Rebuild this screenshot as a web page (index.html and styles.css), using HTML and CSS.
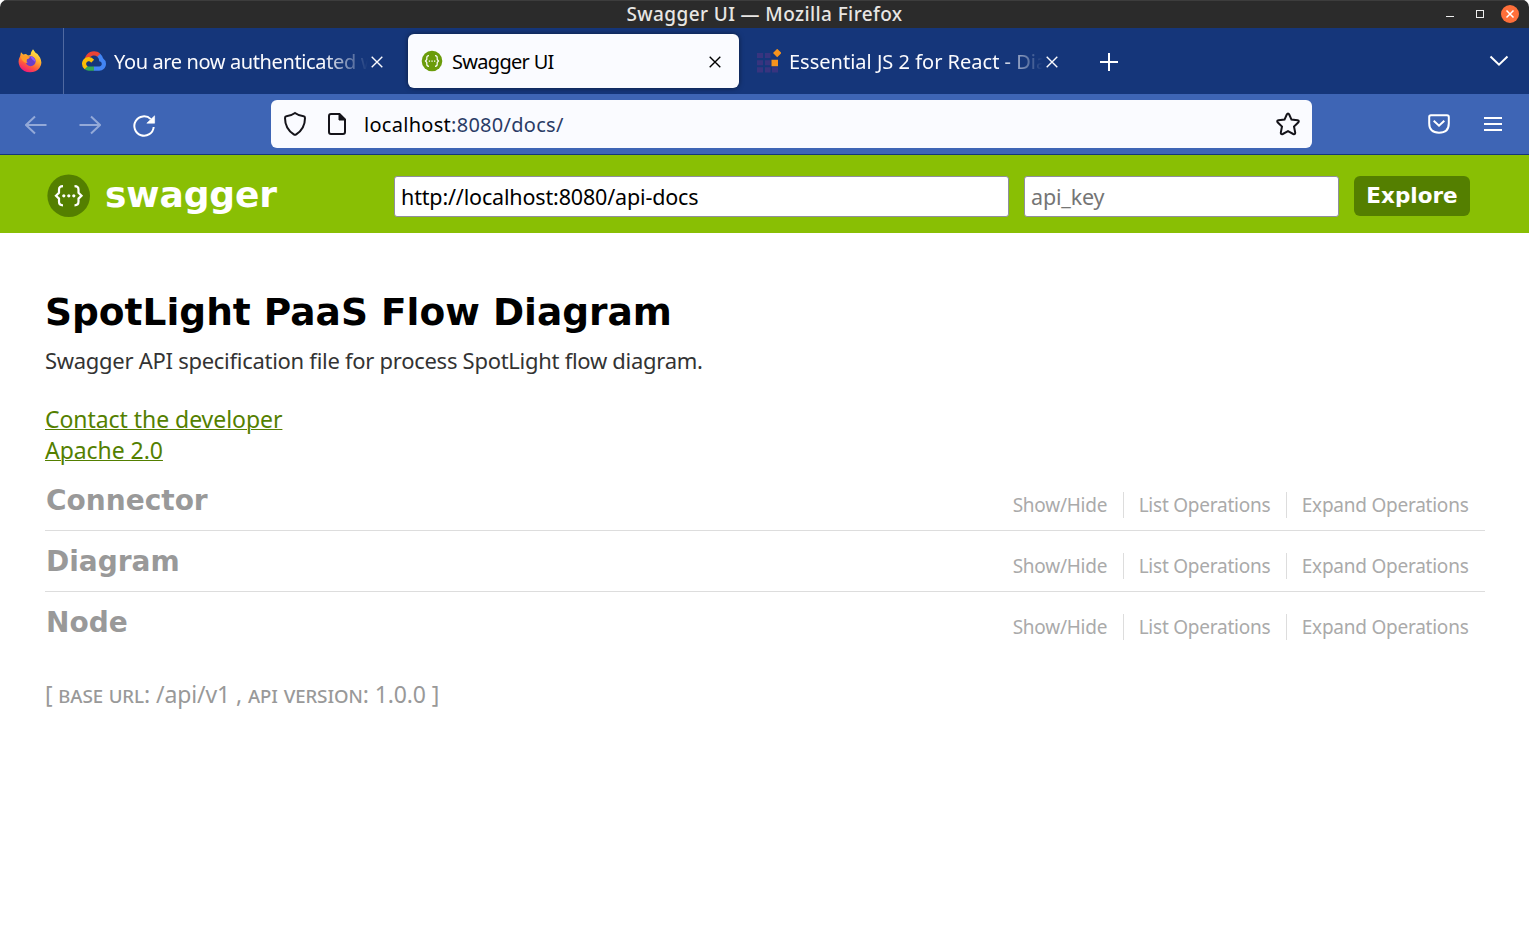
FILE: index.html
```
<!DOCTYPE html>
<html lang="en">
<head>
<meta charset="utf-8">
<title>Swagger UI</title>
<link rel="stylesheet" href="styles.css">
</head>
<body>
<div class="window">
  <div class="titlebar">
    <span class="window-title">Swagger UI — Mozilla Firefox</span>
    <div class="window-controls">
      <svg width="80" height="20" viewBox="0 0 80 20">
        <path d="M6 12.500h8" stroke="#eee"/>
        <rect x="36.500" y="6.500" width="7" height="7" fill="none" stroke="#eee"/>
        <circle cx="70" cy="10" r="9" fill="#ff6f3a"/>
        <path d="M66.500 6.500l7 7m0-7l-7 7" stroke="#fff" stroke-width="1.500"/>
      </svg>
    </div>
  </div>

  <div class="tabstrip">
    <div class="firefox-view">
      <svg width="24" height="24" viewBox="0 0 24 24">
        <defs>
          <linearGradient id="fox" x1="0.800" y1="0" x2="0.300" y2="1">
            <stop offset="0" stop-color="#fff44f"/><stop offset=".4" stop-color="#ffb02e"/>
            <stop offset=".7" stop-color="#ff5a3c"/><stop offset="1" stop-color="#f0147d"/>
          </linearGradient>
        </defs>
        <path d="M2.200 7L3 3.200 5.200 5.500 8 5l2 1.500 2.500-.5Q13 2.500 15 .3L17.500 3.800 19.500 5l2.500 3.500q3 6-.5 10.500Q18 23.300 12 23.300 5.500 23.300 2 18-1 12.500 2.200 7z" fill="url(#fox)"/>
        <circle cx="12.600" cy="12.200" r="5" fill="#6a3fc8"/>
        <path d="M2.500 7.500q5-2 9.500.3-.5 2-3 2.500-1 2 .5 3.700-5 .3-7-6.500z" fill="#ff9b28"/>
        <path d="M12 7.200q5 0 5.500 6l-3.500-3z" fill="#9059ff"/>
      </svg>
    </div>
    <div class="tab">
      <svg class="favicon" width="24" height="24" viewBox="0 -25 256 256">
        <path fill="#ea4335" d="M170.252 56.819l22.253-22.253 1.483-9.370C153.437-11.677 88.976-7.496 52.420 33.920 42.267 45.423 34.734 59.764 30.717 74.573l7.970-1.123 44.505-7.340 3.436-3.513c19.797-21.742 53.270-24.667 76.128-6.168z"/>
        <path fill="#4285f4" d="M224.205 73.918a100.249 100.249 0 0 0-30.217-48.722l-31.232 31.232a55.515 55.515 0 0 1 20.379 44.037v5.544c15.350 0 27.797 12.445 27.797 27.796 0 15.352-12.446 27.485-27.797 27.485h-55.671l-5.466 5.934v33.340l5.466 5.231h55.670c39.930.311 72.553-31.494 72.864-71.424a72.303 72.303 0 0 0-31.793-60.453"/>
        <path fill="#34a853" d="M71.870 205.796h55.593V161.290H71.870a27.275 27.275 0 0 1-11.467-2.498l-7.886 2.420-22.408 22.253-1.952 7.574a71.990 71.990 0 0 0 43.713 14.757"/>
        <path fill="#fbbc05" d="M71.870 61.425C31.940 61.664-.237 94.228.001 134.158a72.301 72.301 0 0 0 28.222 56.880l32.248-32.246c-13.990-6.322-20.208-22.786-13.887-36.776 6.320-13.990 22.786-20.208 36.775-13.888a27.796 27.796 0 0 1 13.887 13.888l32.248-32.248A72.224 72.224 0 0 0 71.870 61.425"/>
      </svg>
      <span class="tab-label tab-label-auth">You are now authenticated with</span>
      <svg class="tab-close" width="12" height="12" viewBox="0 0 12 12"><path d="M.7.7l10.600 10.600m0-10.600L.7 11.300"/></svg>
    </div>
    <div class="tab tab-active">
      <svg class="favicon" width="24" height="24" viewBox="0 0 24 24">
        <circle cx="12" cy="12" r="10.300" fill="#6b9c0b"/>
        <g fill="none" stroke="#fff" stroke-width="1.200"><path d="M9 6.700q-2.200 0-2.200 2v1.800L5.500 12l1.300 1.500v1.800q0 2 2.200 2M15 6.700q2.200 0 2.200 2v1.800l1.300 1.500-1.300 1.500v1.800q0 2-2.200 2"/></g>
        <path d="M8.800 11.400h1.300v1.300H8.800zM11.400 11.400h1.300v1.300h-1.300zM14 11.400h1.300v1.300H14z" fill="#fff"/>
      </svg>
      <span class="tab-label tab-label-swagger">Swagger UI</span>
      <svg class="tab-close" width="12" height="12" viewBox="0 0 12 12"><path d="M.7.7l10.600 10.600m0-10.600L.7 11.300"/></svg>
    </div>
    <div class="tab">
      <svg class="favicon" width="24" height="24" viewBox="0 0 24 24">
        <path fill="#38347f" d="M0 4h6v5H0zM8 4h5.500v5H8zM0 11.200h6v5H0zM8 11.200h5.500v5H8zM0 18.300h6v5.200H0zM8 18.300h5.500v5.200H8zM15 18.300h6v5.200h-6z"/>
        <path fill="#f7941d" d="M14.500 10.700h6.500v6.500h-6.500zM20.200-.2l4.200 4.200-4.200 4.200L16 4z"/>
      </svg>
      <span class="tab-label tab-label-essential">Essential JS 2 for React - Diagram</span>
      <svg class="tab-close" width="12" height="12" viewBox="0 0 12 12"><path d="M.7.7l10.600 10.600m0-10.600L.7 11.300"/></svg>
    </div>
    <svg class="new-tab" width="18" height="18" viewBox="0 0 18 18"><path d="M9 0v18M0 9h18"/></svg>
    <svg class="all-tabs" width="20" height="12" viewBox="0 0 20 12"><path d="M1.500 1.500l8.500 8.200 8.500-8.200"/></svg>
  </div>

  <div class="toolbar">
    <div class="nav-buttons">
      <svg class="nav-disabled" width="22" height="20" viewBox="0 0 22 20"><path d="M21.500 10H1M10 1.500L1 10l9 8.500"/></svg>
      <svg class="nav-disabled" width="22" height="20" viewBox="0 0 22 20"><path d="M.5 10H21M12 1.500l9 8.500-9 8.500"/></svg>
      <svg class="reload" width="24" height="24" viewBox="0 0 24 24">
        <path d="M18.800 5.100A9.700 9.700 0 1 0 21.700 13" fill="none" stroke="#fff" stroke-width="2"/>
        <path d="M22.600 1.800V9.200h-7.800z" fill="#fff" stroke="#fff" stroke-width=".6"/>
      </svg>
    </div>
    <div class="urlbar">
      <svg class="url-icon" width="24" height="26" viewBox="0 0 24 26"><path d="M12 2Q16 4.900 20.600 5.300Q22 5.500 22 6.900Q22 17.500 13.200 23.400Q12 24.200 10.800 23.400Q2 17.500 2 6.900Q2 5.500 3.400 5.300Q8 4.900 12 2z"/></svg>
      <svg class="url-icon" width="20" height="24" viewBox="0 0 20 24"><path d="M4 2h8.500l5.500 5.500V20q0 2-2 2H4q-2 0-2-2V4q0-2 2-2z"/><path class="fold" d="M12 2v6h6z"/></svg>
      <span class="url-text">localhost<span class="url-path">:8080/docs/</span></span>
      <svg class="url-icon star" width="26" height="26" viewBox="0 0 26 26"><path d="M13 2.500Q13.700 2.500 14.200 3.500L16.500 8.600 22.500 9.300Q24.700 9.800 23.200 11.500L19 15.500 20.200 21.500Q20.300 23.800 18.200 23L13 20.200 7.800 23Q5.700 23.800 5.800 21.500L7 15.500 2.800 11.500Q1.300 9.800 3.500 9.300L9.500 8.600 11.800 3.500Q12.300 2.500 13 2.500z"/></svg>
    </div>
    <div class="toolbar-actions">
      <svg width="22" height="20" viewBox="0 0 22 20"><path d="M3 1.200h16q1.800 0 1.800 1.800v6.200q0 9.500-9.800 9.500T1.200 9.200V3q0-1.800 1.800-1.800z"/><path d="M5.700 6.700l5.300 5 5.300-5"/></svg>
      <svg width="18" height="16" viewBox="0 0 18 16"><path d="M0 2h18M0 8h18M0 14h18"/></svg>
    </div>
  </div>

  <header class="swagger-header">
    <svg class="swagger-logo" width="44" height="44" viewBox="0 0 44 44">
      <circle cx="21.700" cy="21.800" r="21.300" fill="#547f00"/>
      <g fill="none" stroke="#fff" stroke-width="2.200"><path d="M16 12.200q-4 0-4 3.500v3.200l-3 2.900 3 2.800v3.200q0 3.500 4 3.500M27.500 12.200q4 0 4 3.500v3.200l3 2.900-3 2.800v3.200q0 3.500-4 3.500"/></g>
      <g fill="#fff"><circle cx="16.800" cy="21.800" r="1.600"/><circle cx="21.800" cy="21.800" r="1.600"/><circle cx="26.800" cy="21.800" r="1.600"/></g>
    </svg>
    <span class="brand">swagger</span>
    <input class="field field-url" type="text" value="http://localhost:8080/api-docs">
    <input class="field field-key" type="text" placeholder="api_key">
    <a class="explore">Explore</a>
  </header>

  <main class="content">
    <h1 class="api-title">SpotLight PaaS Flow Diagram</h1>
    <p class="api-description">Swagger API specification file for process SpotLight flow diagram.</p>
    <div class="api-links">
      <a class="api-link contact">Contact the developer</a>
      <a class="api-link">Apache 2.0</a>
    </div>
    <ul class="resources">
      <li class="resource"><h2 class="resource-name">Connector</h2><div class="options"><a class="option">Show/Hide</a><a class="option">List Operations</a><a class="option">Expand Operations</a></div></li>
      <li class="resource"><h2 class="resource-name">Diagram</h2><div class="options"><a class="option">Show/Hide</a><a class="option">List Operations</a><a class="option">Expand Operations</a></div></li>
      <li class="resource"><h2 class="resource-name">Node</h2><div class="options"><a class="option">Show/Hide</a><a class="option">List Operations</a><a class="option">Expand Operations</a></div></li>
    </ul>
    <footer class="api-footer">[ <span class="caps">base url</span>: /api/v1 , <span class="caps">api version</span>: 1.0.0 ]</footer>
  </main>
</div>
</body>
</html>
```
FILE: styles.css
```
* { box-sizing: border-box; }
body { margin: 0; background: #fff; font-family: "Noto Sans", "Open Sans", sans-serif; }
svg { display: block; flex: none; }
.window { width: 1529px; height: 932px; overflow: hidden; border-radius: 7px 7px 0 0; background: #fff; }

.titlebar { display: grid; grid-template-columns: 1fr auto 1fr; align-items: center; height: 28px; padding-bottom: 1px; background: #2b2b2b; border-top: 1px solid #3d3d3d; }
.window-title { grid-column: 2; color: #e8e6e3; font-size: 19px; font-weight: 500; letter-spacing: .4px; line-height: 26px; white-space: nowrap; }
.window-controls { justify-self: end; padding-right: 9px; }

.tabstrip { display: flex; align-items: center; height: 66px; background: #15367a; color: #fbfbfe; }
.firefox-view { display: flex; align-items: center; justify-content: center; width: 64px; height: 66px; margin-right: 6px; padding-right: 3px; border-right: 1px solid #5069a0; }
.tab { display: flex; align-items: center; width: 331px; height: 54px; padding: 1px 18px 0 12px; margin-right: 6px; border-radius: 6px; }
.tab:nth-child(2) { margin-right: 7px; }
.favicon { margin-bottom: 1px; }
.tab-active { background: #fafbff; color: #000; box-shadow: 0 0 5px rgba(0, 0, 0, .5); }
.tab-label { flex: 1; min-width: 0; margin: 0 10px 0 8px; overflow: hidden; font-size: 20px; line-height: 30px; white-space: nowrap; }
.tab-label-auth, .tab-label-essential { -webkit-mask-image: linear-gradient(to right, #000 calc(100% - 45px), transparent); mask-image: linear-gradient(to right, #000 calc(100% - 45px), transparent); }
.tab-label-auth { margin-right: 3px; letter-spacing: -.38px; }
.tab-label-swagger { letter-spacing: -.7px; }
.tab-label-essential { margin-right: 3px; }
.tab-close { margin-top: 1px; fill: none; stroke: currentColor; stroke-width: 1.4; }
.new-tab { margin: 2px 0 0 18px; fill: none; stroke: #fff; stroke-width: 2; }
.all-tabs { margin: 0 20px 1px auto; fill: none; stroke: #fff; stroke-width: 2; }

.toolbar { display: flex; align-items: center; height: 61px; background: #3e65b5; border-bottom: 1px solid #15367a; }
.nav-buttons { display: flex; align-items: center; gap: 32px; width: 271px; padding: 1px 0 0 25px; }
.nav-disabled { fill: none; stroke: #93a9d8; stroke-width: 2; }
.reload { margin: 2px 0 0 -1px; }
.urlbar { display: flex; align-items: center; width: 1041px; height: 48px; padding: 0 11px 0 12px; border-radius: 6px; background: #fafbff; color: #000; font-size: 20px; letter-spacing: .28px; }
.url-icon { fill: none; stroke: #15141a; stroke-width: 2; }
.url-icon + .url-icon { margin-left: 20px; }
.fold { fill: #15141a; stroke-width: 1; }
.url-text { flex: 1; margin-left: 17px; white-space: nowrap; }
.url-path { color: #2a3b66; }
.toolbar-actions { display: flex; align-items: center; gap: 34px; margin-left: 116px; fill: none; stroke: #fff; stroke-width: 2; }

.swagger-header { display: flex; align-items: center; height: 78px; padding: 4px 59px 0 47px; background: #89bf04; }
.brand { width: 289px; margin: -4px 0 0 14px; color: #fff; font: bold 36px "DejaVu Sans", sans-serif; letter-spacing: -.1px; }
.field { height: 41px; padding: 0 6px; border: 1px solid #8f8f9d; border-radius: 3px; background: #fff; color: #000; font-family: "Noto Sans", sans-serif; font-size: 21.500px; letter-spacing: -.16px; outline: 0; }
.field-url { width: 615px; }
.field-key { width: 315px; margin: 0 15px; }
.field-key::placeholder { color: #757575; }
.explore { width: 116px; height: 40px; border-radius: 6px; background: #547f00; color: #fff; font: bold 21.500px/39px "DejaVu Sans", sans-serif; text-align: center; }

.content { padding: 56px 44px 0 45px; }
.api-title { margin: 0; color: #000; font: bold 37.500px/46px "DejaVu Sans", sans-serif; }
.api-description { margin: 9px 0 28px; color: #333; font-size: 22px; letter-spacing: -.28px; line-height: 32px; white-space: nowrap; }
.api-links { display: flex; flex-direction: column; align-items: flex-start; }
.api-link { color: #547f00; font-size: 23px; letter-spacing: -.05px; line-height: 31px; text-decoration: underline; text-decoration-thickness: 1px; white-space: nowrap; }
.resources { margin: 4px 0 0; padding: 0; list-style: none; }
.resource { display: flex; align-items: flex-start; justify-content: space-between; height: 61px; border-bottom: 1px solid #ddd; }
.resource:last-child { border-bottom-color: transparent; }
.resource-name { margin: 14px 0 0 1px; color: #999; font: bold 28px/34px "DejaVu Sans", sans-serif; }
.options { display: flex; margin-top: 22px; padding-right: 1px; }
.option { padding: 0 15.500px 0 15px; border-right: 1px solid #ddd; color: #aaa; font-size: 19px; letter-spacing: -.24px; line-height: 26px; white-space: nowrap; }
.option:last-child { border-right: 0; }
.api-footer { margin-top: 25px; color: #999; font-size: 23px; letter-spacing: -.1px; line-height: 32px; white-space: nowrap; }
.caps { font-variant: small-caps; }
```
